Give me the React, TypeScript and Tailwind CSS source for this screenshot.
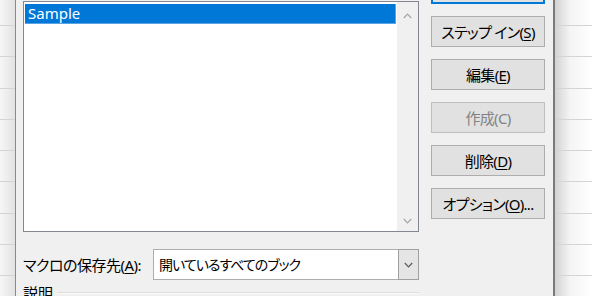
import type { ReactNode } from "react";

// gridlines of the sheet behind the dialog (Excel rows at 125%: ~31.25px)
function SheetStrip({ className }: { className: string }) {
  return (
    <div className={`flex flex-col ${className}`}>
      <div className="h-[25px] shrink-0" />
      <div className="h-[31px] shrink-0 border-t border-[#d4d4d4]" />
      <div className="h-[32px] shrink-0 border-t border-[#d4d4d4]" />
      <div className="h-[31px] shrink-0 border-t border-[#d4d4d4]" />
      <div className="h-[31px] shrink-0 border-t border-[#d4d4d4]" />
      <div className="h-[31px] shrink-0 border-t border-[#d4d4d4]" />
      <div className="h-[32px] shrink-0 border-t border-[#d4d4d4]" />
      <div className="h-[31px] shrink-0 border-t border-[#d4d4d4]" />
      <div className="h-[31px] shrink-0 border-t border-[#d4d4d4]" />
      <div className="h-[31px] shrink-0 border-t border-[#d4d4d4]" />
    </div>
  );
}

function Btn({ children, disabled, isDefault }: { children?: ReactNode; disabled?: boolean; isDefault?: boolean }) {
  return (
    <button
      className={`h-[31px] w-[114px] shrink-0 flex items-center justify-center bg-[#e1e1e1] text-[15px] leading-[20px] tracking-[-0.7px] ${
        isDefault ? "border-2 border-[#0078d7]" : disabled ? "border border-[#bfbfbf] text-[#838383]" : "border border-[#adadad] text-black"
      }`}
    >
      {children}
    </button>
  );
}

function Chevron({ up, color }: { up?: boolean; color: string }) {
  return (
    <svg width="9" height="6" viewBox="0 0 9 6" className="block">
      <polyline
        points={up ? "0.8,5 4.5,1.2 8.2,5" : "0.8,1 4.5,4.8 8.2,1"}
        fill="none"
        stroke={color}
        strokeWidth="1.2"
      />
    </svg>
  );
}

export default function App() {
  return (
    <div className="w-[592px] h-[296px] overflow-hidden flex bg-white text-black font-['Noto_Sans','Noto_Sans_CJK_JP',sans-serif] [font-feature-settings:'palt']">
      {/* sheet, left of the dialog */}
      <SheetStrip className="w-[15px] shrink-0 bg-linear-to-r from-[#f6f6f6] to-[#e2e2e2]" />

      {/* dialog */}
      <div className="w-[540px] shrink-0 flex bg-[#f0f0f0] border-l border-r-2 border-l-[#8a8a8a] border-r-[#7a7a7a] pl-[7px]">
        <div className="flex flex-col w-[396px] shrink-0">
          {/* macro list */}
          <div className="mt-[1px] h-[231px] shrink-0 flex bg-white border border-[#828790]">
            <div className="flex-1 pt-[2px] pl-[1px]">
              <div className="h-[20px] bg-[#0078d7] border-r border-b border-[#5aa3e4] pl-[3px] text-white text-[15px] leading-[19px]">
                Sample
              </div>
            </div>
            <div className="w-[21px] ml-[1px] bg-[#f0f0f0] flex flex-col items-center justify-between pt-[11px] pb-[7px]">
              <Chevron up color="#a6a6a6" />
              <Chevron color="#a6a6a6" />
            </div>
          </div>

          {/* store location */}
          <div className="mt-[17px] shrink-0 flex items-center">
            <div className="w-[130px] shrink-0 text-[15px] leading-[20px] tracking-[-0.5px]">
              マクロの保存先(<span className="underline underline-offset-2">A</span>):
            </div>
            <div className="flex-1 h-[31px] flex bg-white border border-[#adadad]">
              <div className="flex-1 pl-[5px] text-[14px] leading-[29px] tracking-[-1px]">開いているすべてのブック</div>
              <div className="w-[21px] -my-px -mr-px flex items-center justify-center bg-[#e5e5e5] border border-[#a0a0a0]">
                <Chevron color="#5a5a5a" />
              </div>
            </div>
          </div>

          {/* description group */}
          <div className="mt-[3px] shrink-0 flex items-center">
            <div className="text-[15px] leading-[20px]">説明</div>
            <div className="flex-1 ml-[5px] h-[2px] border-t border-[#dcdcdc] bg-[#fbfbfb]" />
          </div>
        </div>

        {/* buttons */}
        <div className="ml-[12px] -mt-[27px] flex flex-col gap-[12px]">
          <Btn isDefault />
          <Btn>
            ステップ イン(<span className="underline underline-offset-2">S</span>)
          </Btn>
          <Btn>
            編集(<span className="underline underline-offset-2">E</span>)
          </Btn>
          <Btn disabled>作成(C)</Btn>
          <Btn>
            削除(<span className="underline underline-offset-2">D</span>)
          </Btn>
          <Btn>
            オプション(<span className="underline underline-offset-2">O</span>)...
          </Btn>
        </div>
      </div>

      {/* sheet, right of the dialog (dialog shadow) */}
      <SheetStrip className="flex-1 bg-linear-to-r from-[#d2d2d2] via-[#f4f4f4] via-40% to-white" />
    </div>
  );
}
